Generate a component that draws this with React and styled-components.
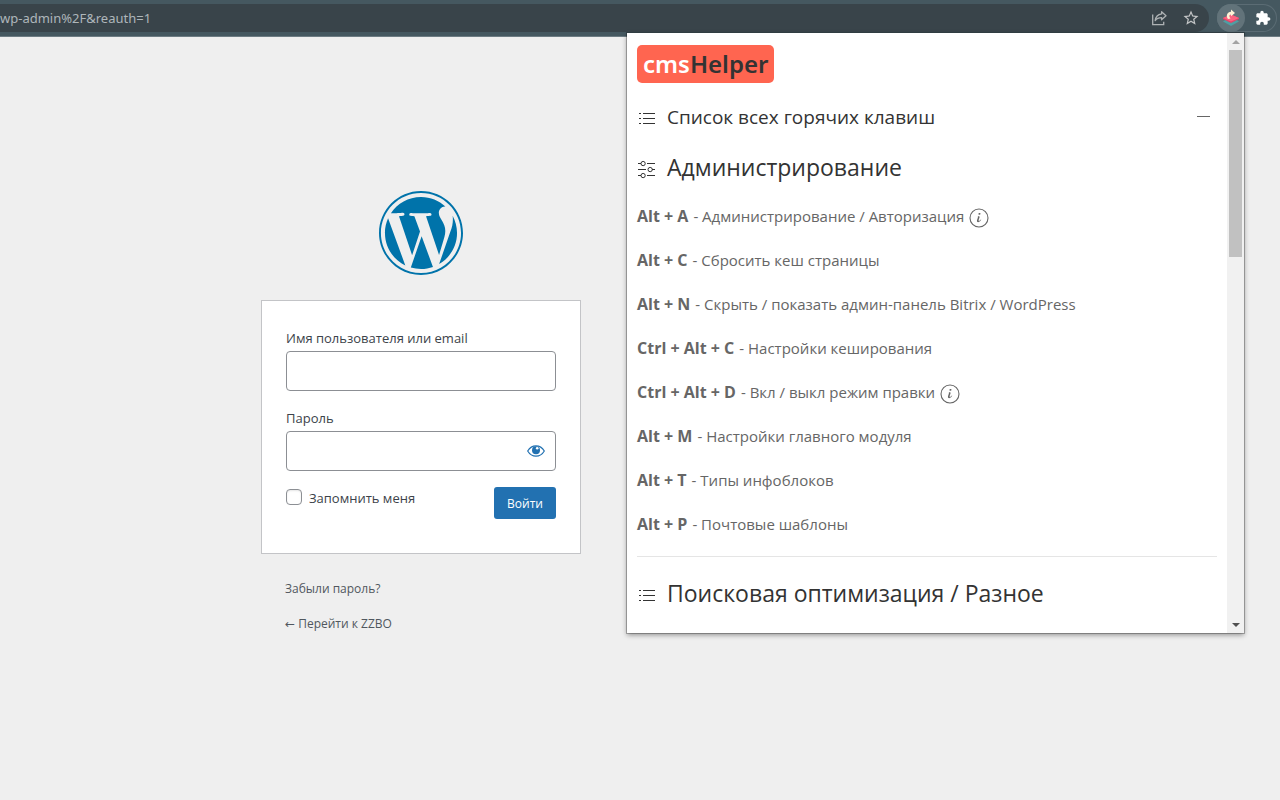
import React from "react";
import styled, { createGlobalStyle } from "styled-components";

const GlobalStyle = createGlobalStyle`
  * {
    box-sizing: border-box;
  }

  body {
    margin: 0;
    background: #efefef;
    font-family: "Open Sans", "DejaVu Sans", sans-serif;
  }
`;

const Page = styled.div`
  position: relative;
  min-height: 100vh;
`;

/* browser toolbar */

const Toolbar = styled.header`
  display: flex;
  align-items: center;
  gap: 8px;
  height: 37px;
  padding: 0 3px 1px 0;
  background: #455860;
  border-bottom: 1px solid #6d7c83;
`;

const AddressBar = styled.div`
  flex: 1;
  display: flex;
  align-items: center;
  gap: 14px;
  height: 28px;
  padding-right: 9px;
  border-radius: 0 14px 14px 0;
  background: #39444a;
`;

const Url = styled.span`
  flex: 1;
  color: #aeb6ba;
  font-family: "Noto Sans", sans-serif;
  font-size: 13px;
  line-height: 20px;
`;

const IconButton = styled.button`
  display: flex;
  padding: 0;
  border: 0;
  background: none;
  color: ${props => props.color || "inherit"};
  cursor: pointer;
`;

const Extensions = styled.div`
  display: flex;
  align-items: center;
  gap: 10px;
  height: 28px;
  padding-right: 6px;
  border-radius: 14px;
  box-shadow: inset 0 0 0 1px #5b6c74;
`;

const ActiveExtension = styled(IconButton)`
  align-items: center;
  justify-content: center;
  width: 28px;
  height: 28px;
  border-radius: 50%;
  background: #62737a;
`;

/* login page */

const Login = styled.main`
  display: flex;
  flex-direction: column;
  align-items: center;
  padding: 154px 438px 40px 0;
`;

const LogoLink = styled.a`
  display: flex;
  margin-bottom: 25px;
  color: #0073aa;
`;

const Form = styled.form`
  width: 320px;
  padding: 26px 24px 30px;
  border: 1px solid #c3c4c7;
  background: #fff;
`;

const Label = styled.label`
  color: #3c434a;
  font-size: 13px;
  line-height: 23px;
`;

const Field = styled.div`
  display: flex;
  flex-direction: column;
  gap: 1px;
  margin-bottom: 16px;
`;

const InputWrap = styled.div`
  display: flex;
  align-items: center;
  height: 40px;
  padding-right: 10px;
  border: 1px solid #8c8f94;
  border-radius: 4px;
  background: #fff;
`;

const Input = styled.input`
  flex: 1;
  min-width: 0;
  height: 100%;
  padding: 0 5px;
  border: 0;
  outline: 0;
  background: none;
  font-size: 24px;
`;

const FormFooter = styled.div`
  display: flex;
  align-items: flex-start;
  justify-content: space-between;
  padding-bottom: 4px;
`;

const Remember = styled.div`
  display: flex;
  align-items: flex-start;
  gap: 7px;
`;

const Checkbox = styled.input`
  appearance: none;
  width: 16px;
  height: 16px;
  margin: 2px 0 0;
  border: 1px solid #8c8f94;
  border-radius: 4px;
  background: #fff;
  box-shadow: inset 0 1px 2px rgba(0, 0, 0, 0.1);
`;

const Submit = styled.button`
  height: 32px;
  padding: 0 13px;
  border: 0;
  border-radius: 3px;
  background: #2271b1;
  color: #fff;
  font-family: inherit;
  font-size: 12px;
  cursor: pointer;
`;

const Links = styled.nav`
  display: flex;
  flex-direction: column;
  gap: 15px;
  width: 320px;
  padding: 25px 24px 0;
`;

const TextLink = styled.a`
  color: #50575e;
  font-size: 12px;
  line-height: 20px;
  text-decoration: none;
`;

/* extension popup */

const Popup = styled.aside`
  position: absolute;
  top: 33px;
  right: 36px;
  display: flex;
  width: 617px;
  background: #fff;
  box-shadow: 0 0 0 1px rgba(0, 0, 0, 0.25), 0 2px 5px rgba(0, 0, 0, 0.4);
`;

const PopupBody = styled.div`
  flex: 1;
  display: flex;
  flex-direction: column;
  gap: 20px;
  padding: 12px 10px 23px;
`;

const Brand = styled.div`
  align-self: flex-start;
  padding: 0 6px;
  border-radius: 5px;
  background: #ff6550;
  color: #333;
  font-family: "Noto Sans", sans-serif;
  font-size: 24px;
  font-weight: 600;
  line-height: 38px;
`;

const BrandAccent = styled.span`
  color: #fff;
`;

const AccordionTitle = styled.button`
  display: flex;
  align-items: center;
  gap: 10px;
  padding: 0 7px 0 0;
  border: 0;
  background: none;
  color: #333;
  font-family: inherit;
  font-size: 19px;
  line-height: 28px;
  text-align: left;
  cursor: pointer;

  svg:first-child {
    margin-top: 4px;
  }
`;

const TitleText = styled.span`
  flex: 1;
`;

const SectionTitle = styled.h2`
  display: flex;
  align-items: center;
  gap: 10px;
  margin: 0;
  color: #333;
  font-size: 23px;
  font-weight: 400;
  line-height: 33px;

  svg {
    margin-top: 5px;
  }
`;

const Hotkeys = styled.ul`
  display: flex;
  flex-direction: column;
  gap: 20px;
  margin: 0;
  padding: 0;
  list-style: none;
`;

const Hotkey = styled.li`
  display: flex;
  align-items: center;
  gap: 5px;
  color: #666;
  font-size: 15px;
  line-height: 24px;

  svg {
    margin-top: 4px;
  }
`;

const Keys = styled.b`
  font-size: 16px;
`;

const Divider = styled.hr`
  width: 100%;
  margin: 0;
  border: 0;
  border-top: 1px solid #e5e5e5;
`;

const ScrollBar = styled.div`
  display: flex;
  flex-direction: column;
  align-items: center;
  width: 17px;
  background: #f1f1f1;
`;

const ScrollArrow = styled(IconButton)`
  align-items: center;
  justify-content: center;
  width: 17px;
  height: 17px;
`;

const ScrollTrack = styled.div`
  flex: 1;
  width: 13px;
`;

const ScrollThumb = styled.div`
  height: 207px;
  background: #c1c1c1;
`;

const ShareIcon = () => (
  <svg width="18" height="18" viewBox="0 0 18 18" fill="none" stroke="currentColor" strokeWidth="1.3">
    <path d="M2.700 5.500v10.200h11v-3" />
    <path d="M11.600 2.700l4.400 4-4.400 4V8.600C8.600 8.600 6.600 9.500 5.200 11.600c.4-3.500 2.600-6.100 6.400-6.700z" strokeLinejoin="round" />
  </svg>
);

const StarIcon = () => (
  <svg width="18" height="18" viewBox="0 0 24 24" fill="currentColor">
    <path d="M22 9.240l-7.190-.620L12 2 9.190 8.630 2 9.240l5.460 4.730L5.820 21 12 17.270 18.180 21l-1.630-7.030L22 9.240zM12 15.400l-3.760 2.270 1-4.280-3.320-2.880 4.380-.380L12 6.100l1.710 4.040 4.380.380-3.320 2.880 1 4.280L12 15.400z" />
  </svg>
);

const LayersIcon = () => (
  <svg width="18" height="18" viewBox="0 0 18 18">
    <path d="M1 12.500l3-2h10l3 2-8 4.500z" fill="#4f9ea3" />
    <path d="M1 9l8-3.500L17 9v1l-8 4-8-4z" fill="#e83f66" />
    <path d="M1 9l8-3.500L17 9l-8 3.500z" fill="#fb6480" />
    <path d="M6 10C3.600 6.500 5.200 2.900 9 2.700V.5l4 3.500-4 3.300V5.500C7 5.700 6.700 7.500 8.500 9.500z" fill="#fff3d6" />
  </svg>
);

const PuzzleIcon = () => (
  <svg width="16" height="16" viewBox="0 0 24 24" fill="#fff">
    <path d="M20.500 11H19V7c0-1.100-.900-2-2-2h-4V3.500C13 2.120 11.880 1 10.500 1S8 2.120 8 3.500V5H4c-1.100 0-1.990.900-1.990 2v3.800H3.500c1.490 0 2.700 1.210 2.700 2.700s-1.210 2.700-2.700 2.700H2V20c0 1.100.900 2 2 2h3.800v-1.500c0-1.490 1.210-2.700 2.700-2.700 1.490 0 2.700 1.210 2.700 2.700V22H17c1.100 0 2-.900 2-2v-4h1.500c1.380 0 2.500-1.120 2.500-2.500S21.880 11 20.500 11z" />
  </svg>
);

const WordPressLogo = () => (
  <svg width="84" height="84" viewBox="0 0 64 64" fill="currentColor">
    <path d="M4.548 31.999c0 10.900 6.300 20.300 15.500 24.706L6.925 20.827C5.402 24.200 4.500 28 4.500 31.999z M50.531 30.614c0-3.394-1.219-5.742-2.264-7.570c-1.391-2.263-2.695-4.177-2.695-6.439c0-2.523 1.912-4.872 4.609-4.872 c0.121 0 0.200 0 0.400 0.022C45.653 7.300 39.100 4.500 32 4.548c-9.591 0-18.027 4.921-22.936 12.400 c0.645 0 1.300 0 1.800 0.033c2.871 0 7.316-0.349 7.316-0.349c1.479-0.086 1.700 2.100 0.200 2.300 c0 0-1.487 0.174-3.142 0.261l9.997 29.735l6.008-18.017l-4.276-11.718c-1.479-0.087-2.879-0.261-2.879-0.261 c-1.480-0.087-1.306-2.349 0.174-2.262c0 0 4.500 0.300 7.200 0.349c2.870 0 7.317-0.349 7.317-0.349 c1.479-0.086 1.700 2.100 0.200 2.262c0 0-1.489 0.174-3.142 0.261l9.920 29.508l2.739-9.148 C49.628 35.700 50.500 33 50.500 30.614z M32.481 34.400l-8.237 23.934c2.460 0.700 5.100 1.100 7.800 1.100 c3.197 0 6.262-0.552 9.116-1.556c-0.072-0.118-0.141-0.243-0.196-0.379L32.481 34.400z M56.088 18.800 c0.119 0.900 0.200 1.800 0.200 2.823c0 2.785-0.521 5.916-2.088 9.832l-8.385 24.242c8.161-4.758 13.650-13.600 13.650-23.728 C59.451 27.200 58.200 22.700 56.100 18.830z M32 0c-17.645 0-32 14.355-32 32C0 49.600 14.400 64 32 64s32-14.355 32-32.001 C64 14.400 49.600 0 32 0z M32 62.533c-16.835 0-30.533-13.698-30.533-30.534C1.467 15.200 15.200 1.500 32 1.500 s30.534 13.700 30.500 30.532C62.533 48.800 48.800 62.500 32 62.533z" />
  </svg>
);

const EyeIcon = () => (
  <svg width="18" height="12" viewBox="0 0 18 12">
    <path d="M.7 6C2.700 2.600 5.700.8 9 .8S15.300 2.600 17.300 6C15.300 9.400 12.300 11.200 9 11.200S2.700 9.400.7 6z" fill="none" stroke="currentColor" strokeWidth="1.200" />
    <circle cx="9" cy="5.200" r="4" fill="currentColor" />
    <circle cx="10.200" cy="3.300" r="1.300" fill="#fff" />
  </svg>
);

const ListIcon = () => (
  <svg width="20" height="20" viewBox="0 0 20 20" fill="currentColor">
    {[4, 9, 14].map(y => (
      <React.Fragment key={y}>
        <rect x="6" y={y} width="12" height="1" />
        <rect x="2" y={y} width="2" height="1" />
      </React.Fragment>
    ))}
  </svg>
);

const SettingsIcon = () => (
  <svg width="20" height="20" viewBox="0 0 20 20" fill="currentColor">
    <ellipse fill="none" stroke="currentColor" cx="6.110" cy="3.550" rx="2.110" ry="2.150" />
    <ellipse fill="none" stroke="currentColor" cx="6.110" cy="15.550" rx="2.110" ry="2.150" />
    <circle fill="none" stroke="currentColor" cx="13.150" cy="9.550" r="2.150" />
    <rect x="1" y="3" width="3" height="1" />
    <rect x="10" y="3" width="8" height="1" />
    <rect x="1" y="9" width="8" height="1" />
    <rect x="15" y="9" width="3" height="1" />
    <rect x="1" y="15" width="3" height="1" />
    <rect x="10" y="15" width="8" height="1" />
  </svg>
);

const InfoIcon = () => (
  <svg width="20" height="20" viewBox="0 0 20 20" fill="currentColor">
    <path d="M12.130,11.590 C11.970,12.840 10.350,14.120 9.100,14.160 C6.170,14.200 9.890,9.460 8.740,8.370 C9.300,8.160 10.620,7.830 10.620,8.810 C10.620,9.630 10.120,10.550 9.880,11.320 C8.660,15.160 12.130,11.150 12.140,11.180 C12.160,11.210 12.160,11.350 12.130,11.590 Z M11.560,5.670 C11.560,6.670 9.360,7.150 9.360,6.030 C9.360,5 11.560,4.540 11.560,5.670 Z" />
    <circle fill="none" stroke="currentColor" strokeWidth="1.100" cx="10" cy="10" r="9" />
  </svg>
);

const MinusIcon = () => (
  <svg width="13" height="14" viewBox="0 0 13 14" fill="#666">
    <rect y="6" width="13" height="1" />
  </svg>
);

const hotkeys = [
  { keys: "Alt + A", text: "Администрирование / Авторизация", info: true },
  { keys: "Alt + C", text: "Сбросить кеш страницы" },
  { keys: "Alt + N", text: "Скрыть / показать админ-панель Bitrix / WordPress" },
  { keys: "Ctrl + Alt + C", text: "Настройки кеширования" },
  { keys: "Ctrl + Alt + D", text: "Вкл / выкл режим правки", info: true },
  { keys: "Alt + M", text: "Настройки главного модуля" },
  { keys: "Alt + T", text: "Типы инфоблоков" },
  { keys: "Alt + P", text: "Почтовые шаблоны" }
];

const BrowserToolbar = () => (
  <Toolbar>
    <AddressBar>
      <Url>wp-admin%2F&amp;reauth=1</Url>
      <IconButton color="#aeb2b4" aria-label="Поделиться">
        <ShareIcon />
      </IconButton>
      <IconButton color="#c3c5c6" aria-label="В закладки">
        <StarIcon />
      </IconButton>
    </AddressBar>
    <Extensions>
      <ActiveExtension aria-label="cmsHelper">
        <LayersIcon />
      </ActiveExtension>
      <IconButton aria-label="Расширения">
        <PuzzleIcon />
      </IconButton>
    </Extensions>
  </Toolbar>
);

const LoginPage = () => (
  <Login>
    <LogoLink href="#" aria-label="WordPress">
      <WordPressLogo />
    </LogoLink>
    <Form onSubmit={e => e.preventDefault()}>
      <Field>
        <Label htmlFor="user">Имя пользователя или email</Label>
        <InputWrap>
          <Input id="user" type="text" />
        </InputWrap>
      </Field>
      <Field>
        <Label htmlFor="password">Пароль</Label>
        <InputWrap>
          <Input id="password" type="password" />
          <IconButton type="button" color="#2271b1" aria-label="Показать пароль">
            <EyeIcon />
          </IconButton>
        </InputWrap>
      </Field>
      <FormFooter>
        <Remember>
          <Checkbox id="remember" type="checkbox" />
          <Label htmlFor="remember">Запомнить меня</Label>
        </Remember>
        <Submit type="submit">Войти</Submit>
      </FormFooter>
    </Form>
    <Links>
      <TextLink href="#">Забыли пароль?</TextLink>
      <TextLink href="#">← Перейти к ZZBO</TextLink>
    </Links>
  </Login>
);

const HelperPopup = () => (
  <Popup>
    <PopupBody>
      <Brand>
        <BrandAccent>cms</BrandAccent>Helper
      </Brand>
      <AccordionTitle aria-expanded="true">
        <ListIcon />
        <TitleText>Список всех горячих клавиш</TitleText>
        <MinusIcon />
      </AccordionTitle>
      <SectionTitle>
        <SettingsIcon />
        Администрирование
      </SectionTitle>
      <Hotkeys>
        {hotkeys.map(({ keys, text, info }) => (
          <Hotkey key={keys}>
            <Keys>{keys}</Keys>
            <span>- {text}</span>
            {info && <InfoIcon />}
          </Hotkey>
        ))}
      </Hotkeys>
      <Divider />
      <SectionTitle>
        <ListIcon />
        Поисковая оптимизация / Разное
      </SectionTitle>
    </PopupBody>
    <ScrollBar>
      <ScrollArrow color="#a3a3a3" aria-label="Вверх">
        <svg width="8" height="4" viewBox="0 0 8 4" fill="currentColor">
          <path d="M0 4l4-4 4 4z" />
        </svg>
      </ScrollArrow>
      <ScrollTrack>
        <ScrollThumb />
      </ScrollTrack>
      <ScrollArrow color="#505050" aria-label="Вниз">
        <svg width="8" height="4" viewBox="0 0 8 4" fill="currentColor">
          <path d="M0 0l4 4 4-4z" />
        </svg>
      </ScrollArrow>
    </ScrollBar>
  </Popup>
);

const App = () => (
  <Page>
    <GlobalStyle />
    <BrowserToolbar />
    <LoginPage />
    <HelperPopup />
  </Page>
);

export default App;
